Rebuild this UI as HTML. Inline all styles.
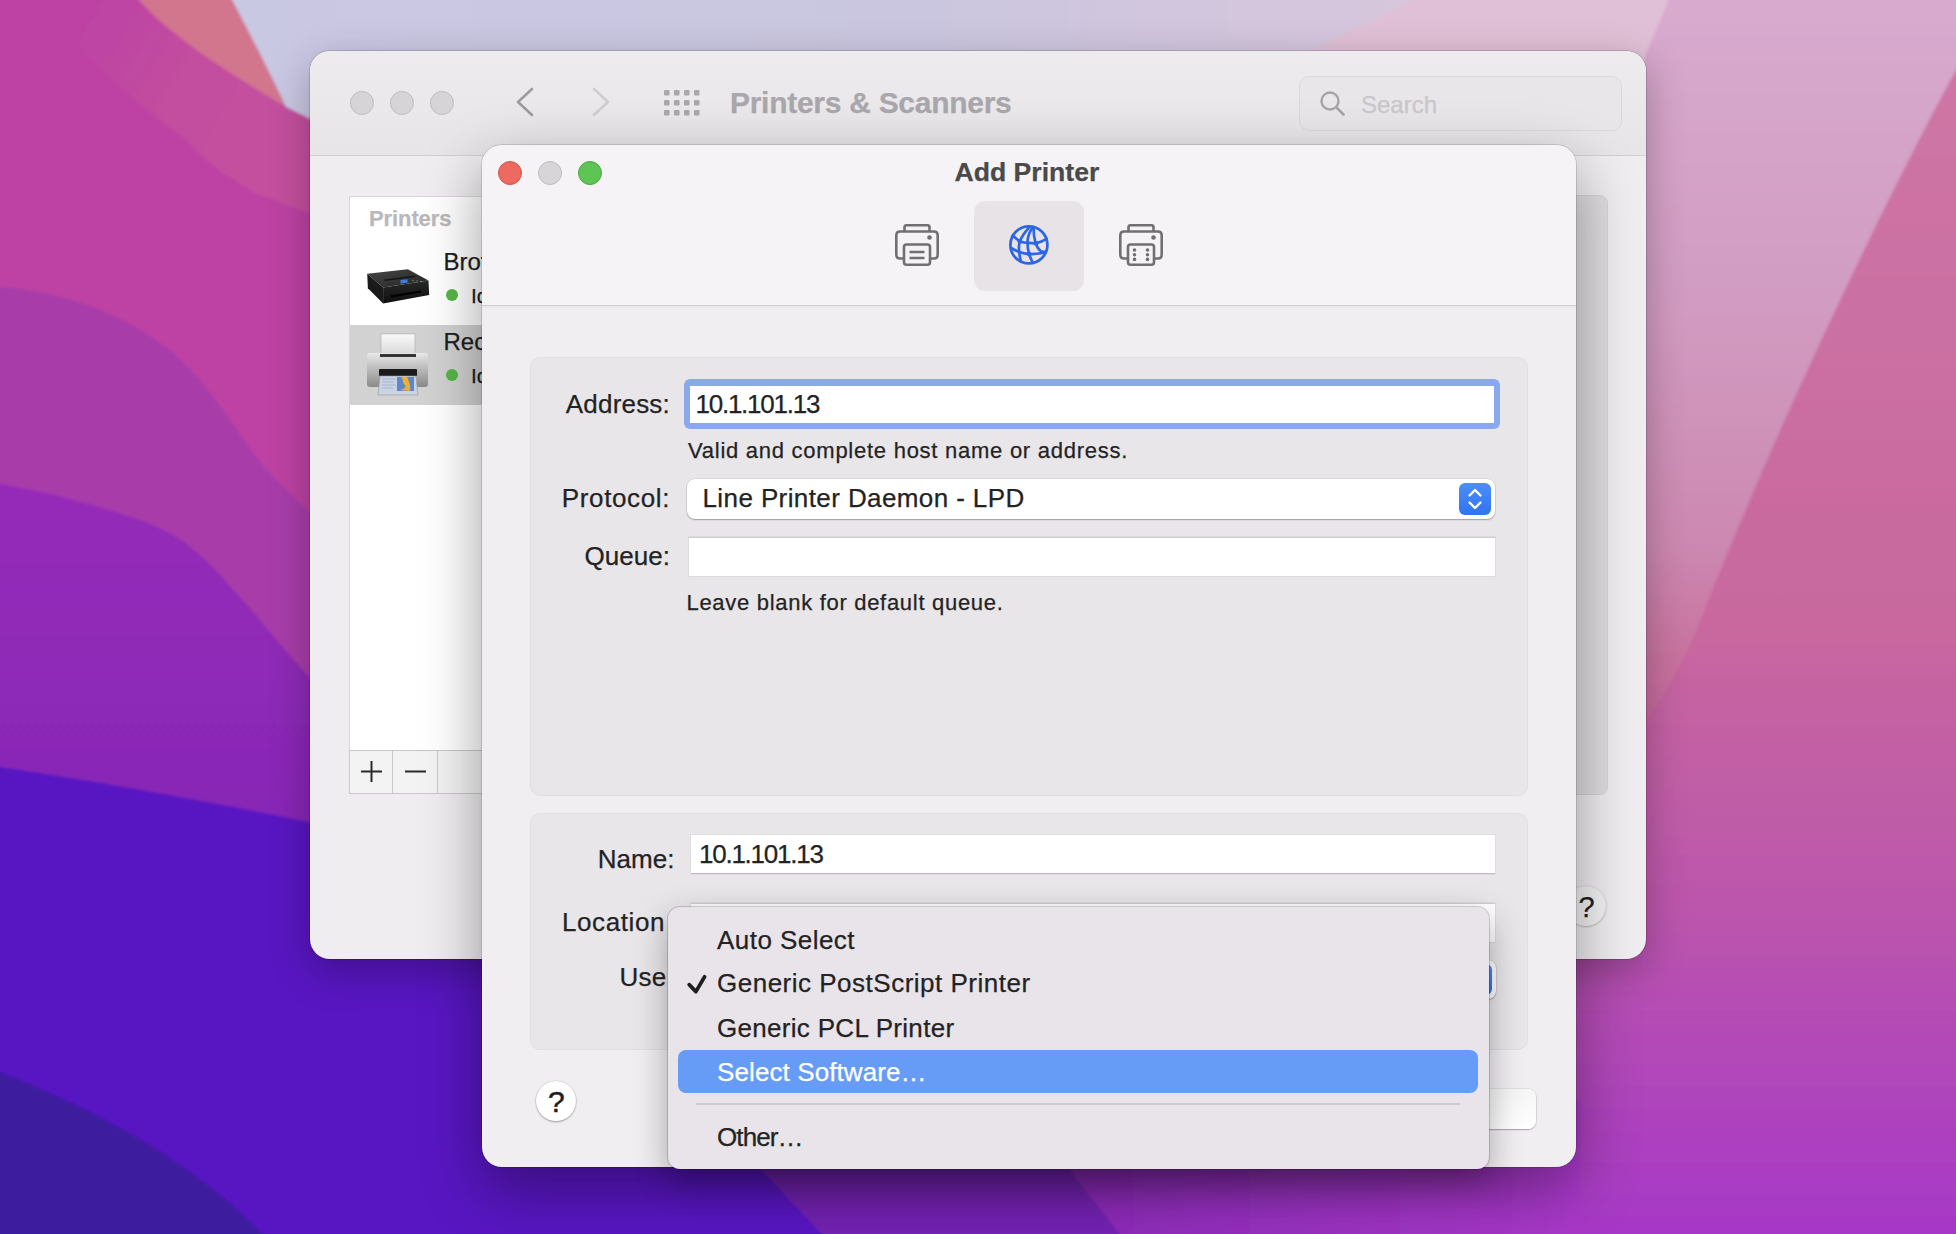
<!DOCTYPE html>
<html><head><meta charset="utf-8"><style>
*{box-sizing:border-box;margin:0;padding:0}
html,body{width:1956px;height:1234px;overflow:hidden}
body{position:relative;font-family:"Liberation Sans",sans-serif;color:#232323;background:#BC42A2}
#wall{position:absolute;left:0;top:0}
.t{position:absolute;white-space:nowrap;-webkit-text-stroke:0.25px currentColor}
.r{position:absolute}
svg.i{position:absolute;overflow:visible}
</style></head><body>
<svg id="wall" width="1956" height="1234" viewBox="0 0 1956 1234">
  <defs>
    <linearGradient id="gR" x1="0" y1="0" x2="0" y2="1">
      <stop offset="0" stop-color="#CF78A6"/>
      <stop offset="0.5" stop-color="#C8689E"/>
      <stop offset="0.72" stop-color="#BB56AC"/>
      <stop offset="1" stop-color="#A334CA"/>
    </linearGradient>
    <linearGradient id="gA" gradientUnits="userSpaceOnUse" x1="0" y1="0" x2="0" y2="730">
      <stop offset="0" stop-color="#D8AACE"/>
      <stop offset="0.4" stop-color="#D29CC2"/>
      <stop offset="0.75" stop-color="#CC88B0"/>
      <stop offset="0.9" stop-color="#C8729F"/>
      <stop offset="1" stop-color="#C6689E"/>
    </linearGradient>
    <linearGradient id="gLav" x1="0" y1="0" x2="1" y2="0">
      <stop offset="0" stop-color="#C9C8E3"/>
      <stop offset="0.55" stop-color="#CAC6E0"/>
      <stop offset="1" stop-color="#D8C6DC"/>
    </linearGradient>
    <linearGradient id="gBot" x1="0" y1="0" x2="1" y2="0">
      <stop offset="0" stop-color="#8A2AB8"/>
      <stop offset="1" stop-color="#A838C8"/>
    </linearGradient>
    <linearGradient id="gBand" gradientUnits="userSpaceOnUse" x1="60" y1="40" x2="260" y2="160">
      <stop offset="0" stop-color="#BD43A3" stop-opacity="0"/>
      <stop offset="0.45" stop-color="#C24C9F"/>
      <stop offset="1" stop-color="#C4509E"/>
    </linearGradient>
    <linearGradient id="gP2" gradientUnits="userSpaceOnUse" x1="0" y1="480" x2="0" y2="800">
      <stop offset="0" stop-color="#9629B8"/>
      <stop offset="1" stop-color="#8828B6"/>
    </linearGradient>
    <filter id="soft" x="-5%" y="-5%" width="110%" height="110%"><feGaussianBlur stdDeviation="1.5"/></filter>
  </defs>
  <g filter="url(#soft)">
  <rect x="-40" y="-40" width="2036" height="1314" fill="url(#gR)"/>
  <!-- right lighter region A -->
  <path d="M1300,-40 L2000,-40 L2000,0 L1956,70 C1890,190 1770,440 1702,617 C1685,660 1668,690 1640,730 L1300,730 Z" fill="url(#gA)"/>
  <!-- light pink band P1 -->
  <path d="M1440,-40 L1685,-40 L1669,0 L1647,51 L1600,200 L1250,200 L1310,51 Z" fill="#E0C0D6"/>
  <!-- lavender top -->
  <path d="M210,-40 L1440,-40 L1415,0 L1310,51 L1250,300 L310,300 L310,119 L286,107 C272,78 253,39 232,0 Z" fill="url(#gLav)"/>
  <!-- left big magenta area -->
  <path d="M-40,-40 L120,-40 L139,0 C171,35 214,64 286,107 L310,119 L900,400 L900,1274 L-40,1274 Z" fill="#BD43A3"/>
  <!-- salmon wedge -->
  <path d="M120,-40 L210,-40 L232,0 C253,39 272,78 286,107 C214,64 171,35 139,0 Z" fill="#D2768E"/>
  <!-- lighter magenta band -->
  <path d="M20,-40 L120,-40 L139,0 C171,35 214,64 286,107 L310,119 L600,260 L600,400 L310,213 C290,206 270,198 255.6,193 C245,187 235,180 221.5,172 C205,160 195,150 187.5,141 C170,128 160,120 149,111 C110,80 60,40 20,-40 Z" fill="url(#gBand)"/>
  <!-- purple band 1 -->
  <path d="M-40,283 L0,286.5 C60,292 120,310 170,350 C205,380 230,420 255,455 C275,480 295,500 330,528 L900,800 L900,1274 L-40,1274 Z" fill="#A83CAA"/>
  <!-- purple band 2 -->
  <path d="M-40,474 L0,483.5 C50,492 100,506 146,522 C175,533 200,550 233.5,590 C255,612 275,640 310,678 L330,700 L900,1000 L900,1274 L-40,1274 Z" fill="url(#gP2)"/>
  <!-- indigo -->
  <path d="M-40,762 L0,767 C80,778 200,800 310,822 L1000,960 L1000,1274 L-40,1274 Z" fill="#5818C2"/>
  <!-- dark indigo -->
  <path d="M-40,1055 L0,1072 C40,1088 80,1105 120,1128 C180,1160 230,1200 262,1234 L300,1274 L-40,1274 Z" fill="#3D1A9E"/>
  <!-- bottom purple areas -->
  <path d="M700,1100 L760,1168 L822,1234 L860,1274 L1580,1274 L1580,1100 Z" fill="#7322B2"/>
  <path d="M1050,1100 L1068,1168 L1120,1234 L1150,1274 L1580,1274 L1580,1100 Z" fill="url(#gBot)"/>
  <path d="M1580,900 L1956,700 L1956,1234 L1580,1234 Z" fill="url(#gR)" opacity="0"/>
  </g>
</svg>
<div id="back" style="position:absolute;left:310px;top:51px;width:1336px;height:908px;border-radius:20px;background:#EFEDEF;box-shadow:0 0 0 1px rgba(0,0,0,0.14),0 12px 40px rgba(0,0,0,0.28);overflow:hidden"><div class="r" style="left:0.00px;top:0.00px;width:1336.00px;height:105.00px;background:linear-gradient(#EDEBED,#E7E5E7);border-bottom:1px solid #D2D0D2"></div><div class="r" style="left:40.00px;top:40.00px;width:24.00px;height:24.00px;border-radius:50%;background:#D6D4D7;border:1px solid #BEBCBF"></div><div class="r" style="left:80.00px;top:40.00px;width:24.00px;height:24.00px;border-radius:50%;background:#D6D4D7;border:1px solid #BEBCBF"></div><div class="r" style="left:120.00px;top:40.00px;width:24.00px;height:24.00px;border-radius:50%;background:#D6D4D7;border:1px solid #BEBCBF"></div><svg class="i" style="left:195px;top:29px" width="120" height="45" viewBox="505 80 120 45">
<path d="M532,89 L518,102 L532,115" fill="none" stroke="#9D9C9F" stroke-width="2.6" stroke-linecap="round" stroke-linejoin="round"/>
<path d="M594,89 L608,102 L594,115" fill="none" stroke="#CFCDD0" stroke-width="2.6" stroke-linecap="round" stroke-linejoin="round"/>
</svg><svg class="i" style="left:350px;top:35px" width="45" height="35" viewBox="660 86 45 35"><rect x="664" y="90" width="5.5" height="5.5" rx="1.2" fill="#A9A7AA"/><rect x="674" y="90" width="5.5" height="5.5" rx="1.2" fill="#A9A7AA"/><rect x="684" y="90" width="5.5" height="5.5" rx="1.2" fill="#A9A7AA"/><rect x="694" y="90" width="5.5" height="5.5" rx="1.2" fill="#A9A7AA"/><rect x="664" y="100" width="5.5" height="5.5" rx="1.2" fill="#A9A7AA"/><rect x="674" y="100" width="5.5" height="5.5" rx="1.2" fill="#A9A7AA"/><rect x="684" y="100" width="5.5" height="5.5" rx="1.2" fill="#A9A7AA"/><rect x="694" y="100" width="5.5" height="5.5" rx="1.2" fill="#A9A7AA"/><rect x="664" y="110" width="5.5" height="5.5" rx="1.2" fill="#A9A7AA"/><rect x="674" y="110" width="5.5" height="5.5" rx="1.2" fill="#A9A7AA"/><rect x="684" y="110" width="5.5" height="5.5" rx="1.2" fill="#A9A7AA"/><rect x="694" y="110" width="5.5" height="5.5" rx="1.2" fill="#A9A7AA"/></svg><div class="t" style="top:36.61px;font-size:30px;line-height:30px;color:#A9A7AB;font-weight:bold;letter-spacing:-0.28px;left:420.00px;">Printers &amp; Scanners</div><div class="r" style="left:988.50px;top:24.50px;width:323.00px;height:55.00px;border-radius:10px;border:1px solid #DAD8DA;background:#E8E6E8"></div><svg class="i" style="left:1005px;top:35px" width="35" height="35" viewBox="1315 86 35 35">
<circle cx="1330" cy="101" r="8.5" fill="none" stroke="#A6A4A7" stroke-width="2.4"/>
<path d="M1336.5,107.5 L1343.5,114.5" stroke="#A6A4A7" stroke-width="2.6" stroke-linecap="round"/>
</svg><div class="t" style="top:41.68px;font-size:24px;line-height:24px;color:#C9C7CA;left:1051.00px;">Search</div><div class="r" style="left:39.00px;top:145.00px;width:451.00px;height:598.00px;background:#FFFFFF;border:1px solid #D9D7D9"></div><div class="t" style="top:157.38px;font-size:22px;line-height:22px;color:#BAB8BB;font-weight:bold;letter-spacing:-0.1px;left:59.00px;">Printers</div><div class="r" style="left:40.00px;top:274.00px;width:450.00px;height:80.00px;background:#D3D2D3"></div><svg class="i" style="left:50px;top:209px" width="80" height="50" viewBox="360 260 80 50">
<defs><linearGradient id="bt" x1="0" y1="0" x2="1" y2="1"><stop offset="0" stop-color="#454545"/><stop offset="1" stop-color="#262626"/></linearGradient>
<linearGradient id="bfr" x1="0" y1="0" x2="0" y2="1"><stop offset="0" stop-color="#2a2a2a"/><stop offset="1" stop-color="#0e0e0e"/></linearGradient></defs>
<path d="M367.2,273.8 L407.9,269.2 L428.5,280.6 L383.1,287.5 Z" fill="url(#bt)"/>
<path d="M367.2,273.8 L383.1,287.5 L383.1,303.4 L367.9,288.2 Z" fill="#1a1a1a"/>
<path d="M383.1,287.5 L428.5,280.6 L429.2,295.1 L383.1,303.4 Z" fill="url(#bfr)"/>
<path d="M384.5,280.2 L415,276.3" stroke="#151515" stroke-width="1.4"/>
<rect x="400.5" y="280" width="7" height="3.6" fill="#3d7fe0" transform="skewY(-6) translate(0,42)"/>
<path d="M391,296.5 L421,291.5" stroke="#000" stroke-width="2.2"/>
<circle cx="413" cy="280.5" r="0.8" fill="#777"/><circle cx="417" cy="281" r="0.8" fill="#777"/><circle cx="421" cy="281.5" r="0.8" fill="#5a5"/>
</svg><div class="t" style="top:199.18px;font-size:24px;line-height:24px;color:#1E1E1E;left:133.50px;">Brother</div><div class="r" style="left:136.00px;top:238.00px;width:12.00px;height:12.00px;border-radius:50%;background:#55B848"></div><div class="t" style="top:233.72px;font-size:21px;line-height:21px;color:#1E1E1E;left:161.00px;">Idle</div><svg class="i" style="left:50px;top:279px" width="80" height="70" viewBox="360 330 80 70">
<defs>
<linearGradient id="pp" x1="0" y1="0" x2="0" y2="1"><stop offset="0" stop-color="#fafafa"/><stop offset="1" stop-color="#d8d8d8"/></linearGradient>
<linearGradient id="pb" x1="0" y1="0" x2="0" y2="1"><stop offset="0" stop-color="#e8e8e8"/><stop offset="0.5" stop-color="#b8b8b8"/><stop offset="1" stop-color="#8a8a8a"/></linearGradient>
</defs>
<rect x="381" y="334" width="34" height="21" fill="url(#pp)" stroke="#aaa" stroke-width="0.6"/>
<rect x="367" y="353" width="61" height="34" rx="3" fill="url(#pb)"/>
<rect x="380" y="354" width="36" height="3" fill="#333"/>
<rect x="379" y="369" width="38" height="7" rx="1" fill="#1a1a1a"/>
<path d="M380,376 L416,376 L418,395 L378,395 Z" fill="#c9d3e3" stroke="#999" stroke-width="0.6"/>
<path d="M382,379 H396 M382,382 H394 M382,385 H396 M382,388 H393" stroke="#9fb0c8" stroke-width="0.8"/>
<rect x="397" y="377" width="17" height="14" fill="#4a78c8" opacity="0.85"/>
<path d="M401,377 C404,380 402,383 405,385 C407,387 404,389 400,390 L410,391 C411,386 409,381 407,377 Z" fill="#F0B030"/>
</svg><div class="t" style="top:279.18px;font-size:24px;line-height:24px;color:#1E1E1E;left:133.50px;">Recent</div><div class="r" style="left:136.00px;top:318.00px;width:12.00px;height:12.00px;border-radius:50%;background:#55B848"></div><div class="t" style="top:313.72px;font-size:21px;line-height:21px;color:#1E1E1E;left:161.00px;">Idle</div><div class="r" style="left:39.00px;top:699.00px;width:451.00px;height:44.00px;background:#F4F3F4;border:1px solid #C9C7C9"></div><div class="r" style="left:82.00px;top:699.00px;width:1.20px;height:44.00px;background:#C9C7C9"></div><div class="r" style="left:126.50px;top:699.00px;width:1.20px;height:44.00px;background:#C9C7C9"></div><svg class="i" style="left:45px;top:704px" width="80" height="35" viewBox="355 755 80 35">
<path d="M371.5,761 V782 M361,771.5 H382" stroke="#2a2a2a" stroke-width="2"/>
<path d="M405,771.5 H426" stroke="#2a2a2a" stroke-width="2"/>
</svg><div class="r" style="left:1140.00px;top:144.00px;width:158.00px;height:600.00px;background:#DFDDDF;border:1px solid #D6D4D6;border-radius:8px"></div><div class="r" style="left:1256.00px;top:835.00px;width:40.00px;height:40.00px;border-radius:50%;background:#F4F3F4;box-shadow:0 0.5px 2px rgba(0,0,0,0.35)"></div><div class="t" style="top:842.45px;font-size:29px;line-height:29px;color:#1E1E1E;left:1268.50px;">?</div></div><div id="dlg" style="position:absolute;left:482px;top:145px;width:1094px;height:1022px;border-radius:20px;background:#F1EEF1;box-shadow:0 0 0 1px rgba(0,0,0,0.12),0 22px 60px rgba(0,0,0,0.38);overflow:hidden"><div class="r" style="left:0.00px;top:0.00px;width:1094.00px;height:161.00px;background:#F6F3F6;border-bottom:1px solid #D0CDD0"></div><div class="r" style="left:0.00px;top:161.00px;width:1094.00px;height:4.00px;background:linear-gradient(rgba(0,0,0,0.035),rgba(0,0,0,0))"></div><div class="r" style="left:16.00px;top:16.00px;width:24.00px;height:24.00px;border-radius:50%;background:#EC6A5F;border:1px solid #D35546"></div><div class="r" style="left:56.00px;top:16.00px;width:24.00px;height:24.00px;border-radius:50%;background:#D8D5D9;border:1px solid #BFBCC0"></div><div class="r" style="left:96.00px;top:16.00px;width:24.00px;height:24.00px;border-radius:50%;background:#5EC453;border:1px solid #4DA73F"></div><div class="t" style="top:13.98px;font-size:26.6px;line-height:26.6px;color:#4A4A4A;font-weight:bold;left:472.50px;">Add Printer</div><div class="r" style="left:492.00px;top:56.00px;width:110.00px;height:90.00px;background:#E7E3E7;border-radius:11px"></div><svg class="i" style="left:409px;top:75px" width="52" height="50" viewBox="891 220 52 50">
<g transform="translate(895,224)" fill="none" stroke="#707070" stroke-width="2.6" stroke-linejoin="round">
<path d="M9.5,7.5 V3 Q9.5,1.3 11.5,1.3 H32.5 Q34.5,1.3 34.5,3 V7.5"/>
<path d="M9,34.5 H5 Q1.3,34.5 1.3,30.5 V11.5 Q1.3,7.5 5,7.5 H39 Q42.7,7.5 42.7,11.5 V30.5 Q42.7,34.5 39,34.5 H35"/>
<rect x="9" y="20.5" width="26" height="20.2" rx="2.5"/>
<path d="M14.5,28 H29.5 M14.5,34 H29.5"/>
</g>
<circle cx="929.5" cy="237.5" r="2.3" fill="#707070"/>
</svg><svg class="i" style="left:633px;top:75px" width="52" height="50" viewBox="1115 220 52 50">
<g transform="translate(1119,224)" fill="none" stroke="#707070" stroke-width="2.6" stroke-linejoin="round">
<path d="M9.5,7.5 V3 Q9.5,1.3 11.5,1.3 H32.5 Q34.5,1.3 34.5,3 V7.5"/>
<path d="M9,34.5 H5 Q1.3,34.5 1.3,30.5 V11.5 Q1.3,7.5 5,7.5 H39 Q42.7,7.5 42.7,11.5 V30.5 Q42.7,34.5 39,34.5 H35"/>
<rect x="9" y="20.5" width="26" height="20.2" rx="2.5"/>
<circle cx="15.5" cy="26" r="1.8" fill="#707070" stroke="none"/><circle cx="15.5" cy="30.7" r="1.8" fill="#707070" stroke="none"/><circle cx="15.5" cy="35.4" r="1.8" fill="#707070" stroke="none"/><circle cx="28.5" cy="26" r="1.8" fill="#707070" stroke="none"/><circle cx="28.5" cy="30.7" r="1.8" fill="#707070" stroke="none"/><circle cx="28.5" cy="35.4" r="1.8" fill="#707070" stroke="none"/>
</g>
<circle cx="1153.5" cy="237.5" r="2.3" fill="#707070"/>
</svg><svg class="i" style="left:522px;top:75px" width="50" height="50" viewBox="0 0 50 50">
<g fill="none" stroke="#2D66E3" stroke-width="2.7" stroke-linecap="round" stroke-linejoin="round">
<circle cx="24.9" cy="24.9" r="18.5"/>
<path d="M25,7.6 C21,12 17.5,17 15.8,21.5 C14.8,25 14.8,29 15.2,32 C15.6,36 16.3,39 17,41.8"/>
<path d="M28.4,7.8 C25.8,11.5 24,16 23.6,20.5 C23.3,25 24,30 25.1,34 C26,37 27.2,39.5 28.4,42"/>
<path d="M29.6,8.6 C29.6,12 30,18 31.6,23 C32.8,26.5 34.6,29.5 37,31.2 C38.5,32 40,32 41.6,31.4"/>
<path d="M8.6,15.6 C11,17.5 13.5,19.8 15.8,21.2 C19,22.6 22,22.9 25,22.9 C28,23 30,23.5 32,23.2 C35.5,22.5 39,21 42.6,18.8"/>
<path d="M7.2,28 C10,29.8 12.5,31 15.4,32 C19,33.4 22,33.9 25.1,34 C29,34.3 34,33.8 39,33"/>
</g>
<circle cx="15.8" cy="21.6" r="2.4" fill="#2D66E3"/>
<circle cx="32" cy="23.4" r="2.4" fill="#2D66E3"/>
<circle cx="25.1" cy="34" r="2.4" fill="#2D66E3"/>
</svg><div class="r" style="left:48.00px;top:212.00px;width:998.00px;height:439.00px;background:#E9E6E9;border:1px solid #E1DEE1;border-radius:10px"></div><div class="t" style="top:245.99px;font-size:26px;line-height:26px;color:#232323;letter-spacing:0.2px;left:-612.00px;width:800px;text-align:right;">Address:</div><div class="r" style="left:201.50px;top:234.00px;width:816.50px;height:50.00px;background:#8AA8EC;border-radius:6px"></div><div class="r" style="left:207.50px;top:240.50px;width:804.50px;height:37.50px;background:#FFFFFF"></div><div class="t" style="top:245.99px;font-size:26px;line-height:26px;color:#232323;letter-spacing:-1.25px;left:213.50px;">10.1.101.13</div><div class="t" style="top:295.08px;font-size:22px;line-height:22px;color:#232323;letter-spacing:0.74px;left:206.00px;">Valid and complete host name or address.</div><div class="t" style="top:339.99px;font-size:26px;line-height:26px;color:#232323;letter-spacing:0.62px;left:-612.00px;width:800px;text-align:right;">Protocol:</div><div class="r" style="left:205.00px;top:334.00px;width:808.00px;height:40.00px;background:#FFFFFF;border-radius:8px;box-shadow:0 0 0 0.5px rgba(0,0,0,0.12),0 1px 1.5px rgba(0,0,0,0.28)"></div><div class="r" style="left:977.00px;top:338.00px;width:32.00px;height:32.00px;background:linear-gradient(#4C8EF7,#2F74F2);border-radius:6px"></div><svg class="i" style="left:977px;top:338px" width="32" height="32" viewBox="0 0 32 32">
<path d="M10.5,12.5 L16,7 L21.5,12.5 M10.5,19.5 L16,25 L21.5,19.5" fill="none" stroke="#fff" stroke-width="2.4" stroke-linecap="round" stroke-linejoin="round"/>
</svg><div class="t" style="top:339.99px;font-size:26px;line-height:26px;color:#232323;letter-spacing:0.4px;left:220.50px;">Line Printer Daemon - LPD</div><div class="t" style="top:397.99px;font-size:26px;line-height:26px;color:#232323;letter-spacing:0.05px;left:-612.00px;width:800px;text-align:right;">Queue:</div><div class="r" style="left:206.50px;top:391.50px;width:806.00px;height:39.50px;background:#FFFFFF;box-shadow:inset 0 1px 0 #D0CDD0,0 0 0 0.5px rgba(0,0,0,0.1)"></div><div class="t" style="top:446.98px;font-size:22px;line-height:22px;color:#232323;letter-spacing:0.7px;left:204.50px;">Leave blank for default queue.</div><div class="r" style="left:48.00px;top:668.00px;width:998.00px;height:237.00px;background:#E9E6E9;border:1px solid #E1DEE1;border-radius:10px"></div><div class="t" style="top:700.99px;font-size:26px;line-height:26px;color:#232323;letter-spacing:0.05px;left:-607.50px;width:800px;text-align:right;">Name:</div><div class="r" style="left:209.00px;top:689.50px;width:803.50px;height:39.50px;background:#FFFFFF;box-shadow:inset 0 -1px 0 #BDBABD,0 0 0 0.5px rgba(0,0,0,0.08)"></div><div class="t" style="top:695.69px;font-size:26px;line-height:26px;color:#232323;letter-spacing:-1.25px;left:217.00px;">10.1.101.13</div><div class="t" style="top:763.79px;font-size:26px;line-height:26px;color:#232323;letter-spacing:0.6px;left:80.00px;">Location</div><div class="r" style="left:209.00px;top:757.50px;width:803.50px;height:39.50px;background:#FFFFFF;box-shadow:inset 0 1px 0 #D0CDD0,0 0 0 0.5px rgba(0,0,0,0.1)"></div><div class="t" style="top:818.99px;font-size:26px;line-height:26px;color:#232323;letter-spacing:0.2px;left:137.50px;">Use</div><div class="r" style="left:205.00px;top:815.00px;width:809.00px;height:39.00px;background:#FFFFFF;border-radius:8px;box-shadow:0 0 0 0.5px rgba(0,0,0,0.12),0 1px 1.5px rgba(0,0,0,0.28)"></div><div class="r" style="left:978.00px;top:819.00px;width:32.00px;height:31.00px;background:linear-gradient(#4C8EF7,#2F74F2);border-radius:6px"></div><div class="r" style="left:54.00px;top:936.00px;width:40.00px;height:40.00px;border-radius:50%;background:#FFFFFF;box-shadow:0 0 0 0.5px rgba(0,0,0,0.12),0 1px 2px rgba(0,0,0,0.3)"></div><div class="t" style="top:942.11px;font-size:30px;line-height:30px;color:#1E1E1E;left:66.00px;-webkit-text-stroke:0.5px #1E1E1E">?</div><div class="r" style="left:898.00px;top:943.50px;width:156.00px;height:40.50px;background:linear-gradient(#F6F5F6,#FFFFFF);border-radius:8px;box-shadow:0 0 0 0.5px rgba(0,0,0,0.12),0 1px 1.5px rgba(0,0,0,0.28)"></div></div><div id="menu" style="position:absolute;left:668px;top:907px;width:820.5px;height:262px;border-radius:12px;background:#E9E4E9;box-shadow:0 0 0 1px rgba(0,0,0,0.16),0 12px 34px rgba(0,0,0,0.32);overflow:hidden"><div class="t" style="top:20.19px;font-size:26px;line-height:26px;color:#232323;letter-spacing:0.45px;left:49.00px;">Auto Select</div><svg class="i" style="left:16px;top:65px" width="26" height="24" viewBox="684 972 26 24">
<path d="M689.2,984.6 L695.9,991.6 L704.6,976.8" fill="none" stroke="#1E1E1E" stroke-width="3.7" stroke-linecap="round" stroke-linejoin="round"/>
</svg><div class="t" style="top:63.39px;font-size:26px;line-height:26px;color:#232323;letter-spacing:0.5px;left:49.00px;">Generic PostScript Printer</div><div class="t" style="top:107.79px;font-size:26px;line-height:26px;color:#232323;letter-spacing:0.3px;left:49.00px;">Generic PCL Printer</div><div class="r" style="left:10.00px;top:142.50px;width:800.00px;height:43.20px;background:#669CF5;border-radius:8px"></div><div class="t" style="top:151.59px;font-size:26px;line-height:26px;color:#FFFFFF;letter-spacing:0.1px;left:49.00px;">Select Software…</div><div class="r" style="left:28.00px;top:196.00px;width:764.00px;height:2.00px;background:#CFCACF"></div><div class="t" style="top:217.19px;font-size:26px;line-height:26px;color:#232323;letter-spacing:-0.9px;left:49.00px;">Other…</div></div>
</body></html>
